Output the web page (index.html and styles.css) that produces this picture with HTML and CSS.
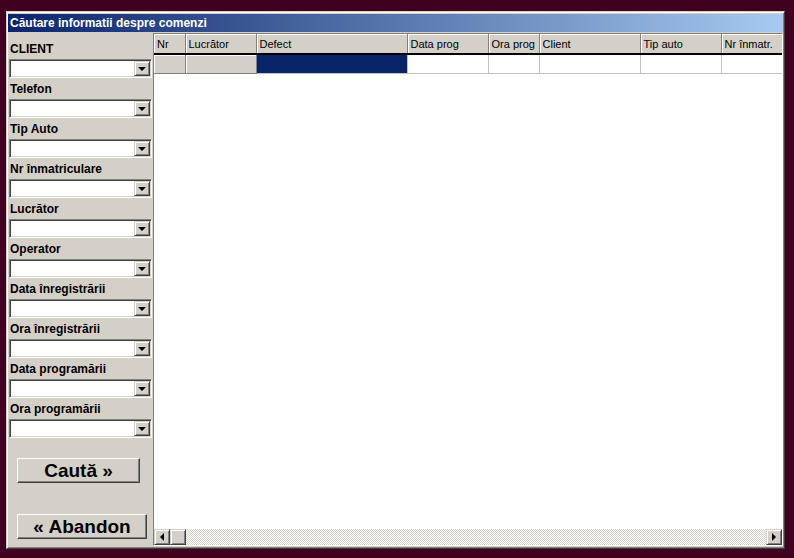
FILE: index.html
```html
<!DOCTYPE html>
<html lang="ro">

<head>
    <meta charset="UTF-8">
    <meta name="viewport" content="width=device-width, initial-scale=1.0">
    <title>Căutare informatii despre comenzi</title>
    <link rel="stylesheet" href="styles.css">
</head>

<body>
    <div class="window">
        <div class="titlebar">Căutare informatii despre comenzi</div>
        <div class="content">
            <div class="filters">
                <div class="field"><div class="label">CLIENT</div><div class="combo"><span class="combo-btn"></span></div></div>
                <div class="field"><div class="label">Telefon</div><div class="combo"><span class="combo-btn"></span></div></div>
                <div class="field"><div class="label">Tip Auto</div><div class="combo"><span class="combo-btn"></span></div></div>
                <div class="field"><div class="label">Nr înmatriculare</div><div class="combo"><span class="combo-btn"></span></div></div>
                <div class="field"><div class="label">Lucrător</div><div class="combo"><span class="combo-btn"></span></div></div>
                <div class="field"><div class="label">Operator</div><div class="combo"><span class="combo-btn"></span></div></div>
                <div class="field"><div class="label">Data înregistrării</div><div class="combo"><span class="combo-btn"></span></div></div>
                <div class="field"><div class="label">Ora înregistrării</div><div class="combo"><span class="combo-btn"></span></div></div>
                <div class="field"><div class="label">Data programării</div><div class="combo"><span class="combo-btn"></span></div></div>
                <div class="field"><div class="label">Ora programării</div><div class="combo"><span class="combo-btn"></span></div></div>

                <button class="btn btn-search">Caută »</button>
                <button class="btn btn-cancel">« Abandon</button>
            </div>

            <div class="grid">
                <div class="grid-view">
                    <table>
                        <colgroup>
                            <col style="width: 31px">
                            <col style="width: 71px">
                            <col style="width: 151px">
                            <col style="width: 81px">
                            <col style="width: 51px">
                            <col style="width: 101px">
                            <col style="width: 81px">
                            <col style="width: 100px">
                        </colgroup>
                        <thead>
                            <tr>
                                <th>Nr</th>
                                <th>Lucrător</th>
                                <th>Defect</th>
                                <th>Data prog</th>
                                <th>Ora prog</th>
                                <th>Client</th>
                                <th>Tip auto</th>
                                <th>Nr înmatr.</th>
                            </tr>
                        </thead>
                        <tbody>
                            <tr>
                                <td class="fixed"></td>
                                <td class="fixed"></td>
                                <td class="selected"></td>
                                <td></td>
                                <td></td>
                                <td></td>
                                <td></td>
                                <td></td>
                            </tr>
                        </tbody>
                    </table>
                </div>
                <div class="hscroll">
                    <span class="sb-btn"><span class="arrow-left"></span></span>
                    <span class="sb-thumb"></span>
                    <span class="sb-track"></span>
                    <span class="sb-btn"><span class="arrow-right"></span></span>
                </div>
            </div>
        </div>
    </div>
</body>

</html>
```

FILE: styles.css
```css
body {
    margin: 0;
    background-color: #400020;
    font-family: "Liberation Sans", Arial, sans-serif;
}

.window {
    box-sizing: border-box;
    width: 779px;
    height: 538px;
    margin: 11px 0 0 6px;
    padding-top: 1px;
    display: flex;
    flex-direction: column;
    background: #d4d0c8;
    border: 1px solid;
    border-color: #d4d0c8 #404040 #404040 #d4d0c8;
    box-shadow: inset 1px 1px #fff, inset -1px -1px #808080;
}

.titlebar {
    height: 18px;
    margin: 1px 1px 0 1px;
    padding-left: 2px;
    line-height: 18px;
    font-size: 12px;
    font-weight: bold;
    color: #fff;
    background: linear-gradient(to right, #0a246a, #a6caf0);
}

.content {
    flex: 1;
    display: flex;
    padding: 0 1px 1px 1px;
    min-height: 0;
}

/* left column with the search fields */
.filters {
    width: 145px;
    padding: 6px 1px 0 1px;
    box-sizing: border-box;
    display: flex;
    flex-direction: column;
}

.label {
    height: 21px;
    line-height: 23px;
    padding-left: 1px;
    font-size: 12px;
    font-weight: bold;
    color: #000;
}

.combo {
    box-sizing: border-box;
    height: 19px;
    display: flex;
    justify-content: flex-end;
    padding: 2px;
    background: #fff;
    border: 1px solid;
    border-color: #808080 #fff #fff #808080;
    box-shadow: inset 1px 1px #404040, inset -1px -1px #d4d0c8;
}

.combo-btn,
.sb-btn,
.sb-thumb {
    box-sizing: border-box;
    display: flex;
    align-items: center;
    justify-content: center;
    background: #d4d0c8;
    border: 1px solid;
    border-color: #d4d0c8 #404040 #404040 #d4d0c8;
    box-shadow: inset 1px 1px #fff, inset -1px -1px #808080;
}

.combo-btn {
    width: 16px;
    height: 15px;
    margin: -1px -1px 0 0;
}

.combo-btn::after {
    content: "";
    border: 4px solid transparent;
    border-bottom: 0;
    border-top-color: #000;
    margin-top: 1px;
}

.btn {
    box-sizing: border-box;
    height: 25px;
    margin-left: 8px;
    padding: 0;
    font-family: "Liberation Sans", Arial, sans-serif;
    font-size: 19px;
    font-weight: bold;
    color: #000;
    background: #d4d0c8;
    border: 1px solid;
    border-color: #fff #404040 #404040 #fff;
    box-shadow: inset -1px -1px #808080;
}

.btn-search {
    width: 123px;
    margin-top: 20px;
}

.btn-cancel {
    width: 130px;
    margin-top: 31px;
}

/* results grid */
.grid {
    flex: 1;
    min-width: 0;
    display: flex;
    flex-direction: column;
    margin: 1px 0 1px 0;
    background: #fff;
    border: 1px solid;
    border-color: #808080 #fff #fff #808080;
}

.grid-view {
    flex: 1;
    overflow: hidden;
}

table {
    table-layout: fixed;
    border-collapse: collapse;
    width: 667px;
}

th {
    box-sizing: border-box;
    height: 20px;
    padding: 0 3px;
    text-align: left;
    font-size: 11px;
    font-weight: normal;
    color: #000;
    white-space: nowrap;
    background: #d4d0c8;
    border-right: 1px solid #808080;
    border-bottom: 2px solid #000;
    box-shadow: inset 1px 1px #fff;
}

td {
    box-sizing: border-box;
    height: 19px;
    padding: 0;
    border-right: 1px solid #c0c0c0;
    border-bottom: 1px solid #c0c0c0;
}

td.fixed {
    background: #d4d0c8;
    border-right-color: #808080;
    border-bottom-color: #808080;
    box-shadow: inset 1px 1px #fff;
}

td.selected {
    background: #0a246a;
}

.hscroll {
    height: 16px;
    display: flex;
}

.sb-btn,
.sb-thumb {
    width: 16px;
    height: 16px;
}

.sb-track {
    flex: 1;
    background: repeating-conic-gradient(#d4d0c8 0 25%, #fff 0 50%) 0 0 / 2px 2px;
}

.arrow-left {
    border: 4px solid transparent;
    border-left: 0;
    border-right-color: #000;
}

.arrow-right {
    border: 4px solid transparent;
    border-right: 0;
    border-left-color: #000;
}
```
